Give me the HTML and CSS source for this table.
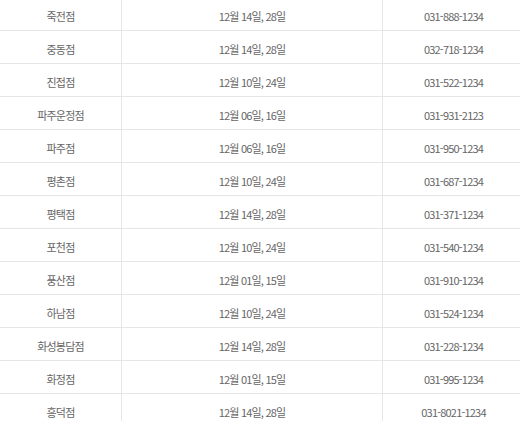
FILE: index.html
```html
<!DOCTYPE html>
<html lang="ko">
<head>
  <meta charset="utf-8">
  <title>휴무일 안내</title>
  <link rel="stylesheet" href="styles.css">
</head>
<body>
  <div class="store-wrap">
    <table class="store-table">
      <colgroup>
        <col class="col-name">
        <col class="col-date">
        <col class="col-tel">
      </colgroup>
      <tbody>
        <tr><td>죽전점</td><td>12월 14일, 28일</td><td>031-888-1234</td></tr>
        <tr><td>중동점</td><td>12월 14일, 28일</td><td>032-718-1234</td></tr>
        <tr><td>진접점</td><td>12월 10일, 24일</td><td>031-522-1234</td></tr>
        <tr><td>파주운정점</td><td>12월 06일, 16일</td><td>031-931-2123</td></tr>
        <tr><td>파주점</td><td>12월 06일, 16일</td><td>031-950-1234</td></tr>
        <tr><td>평촌점</td><td>12월 10일, 24일</td><td>031-687-1234</td></tr>
        <tr><td>평택점</td><td>12월 14일, 28일</td><td>031-371-1234</td></tr>
        <tr><td>포천점</td><td>12월 10일, 24일</td><td>031-540-1234</td></tr>
        <tr><td>풍산점</td><td>12월 01일, 15일</td><td>031-910-1234</td></tr>
        <tr><td>하남점</td><td>12월 10일, 24일</td><td>031-524-1234</td></tr>
        <tr><td>화성봉담점</td><td>12월 14일, 28일</td><td>031-228-1234</td></tr>
        <tr><td>화정점</td><td>12월 01일, 15일</td><td>031-995-1234</td></tr>
        <tr><td>흥덕점</td><td>12월 14일, 28일</td><td>031-8021-1234</td></tr>
      </tbody>
    </table>
  </div>
</body>
</html>
```

FILE: styles.css
```css
body {
  margin: 0;
  padding: 0;
  background-color: white;
  overflow: hidden;
  font-family: "Noto Sans CJK KR", "Noto Sans", sans-serif;
}

/* 위쪽이 조금 잘려 보이는 목록 */
.store-wrap {
  margin-top: -2px;
}

.store-table {
  width: 524px;
  border-collapse: separate;
  border-spacing: 0;
  table-layout: fixed;
}

.col-name {
  width: 122px;
}

.col-date {
  width: 261px;
}

.store-table td {
  height: 28px;
  padding: 4px 0 0;
  border-bottom: 1px solid #e6e6e6;
  text-align: center;
  vertical-align: middle;
  font-size: 11px;
  letter-spacing: -0.8px;
  color: #666;
  white-space: nowrap;
}

.store-table td:nth-child(1),
.store-table td:nth-child(2) {
  border-right: 1px solid #e6e6e6;
}
```
